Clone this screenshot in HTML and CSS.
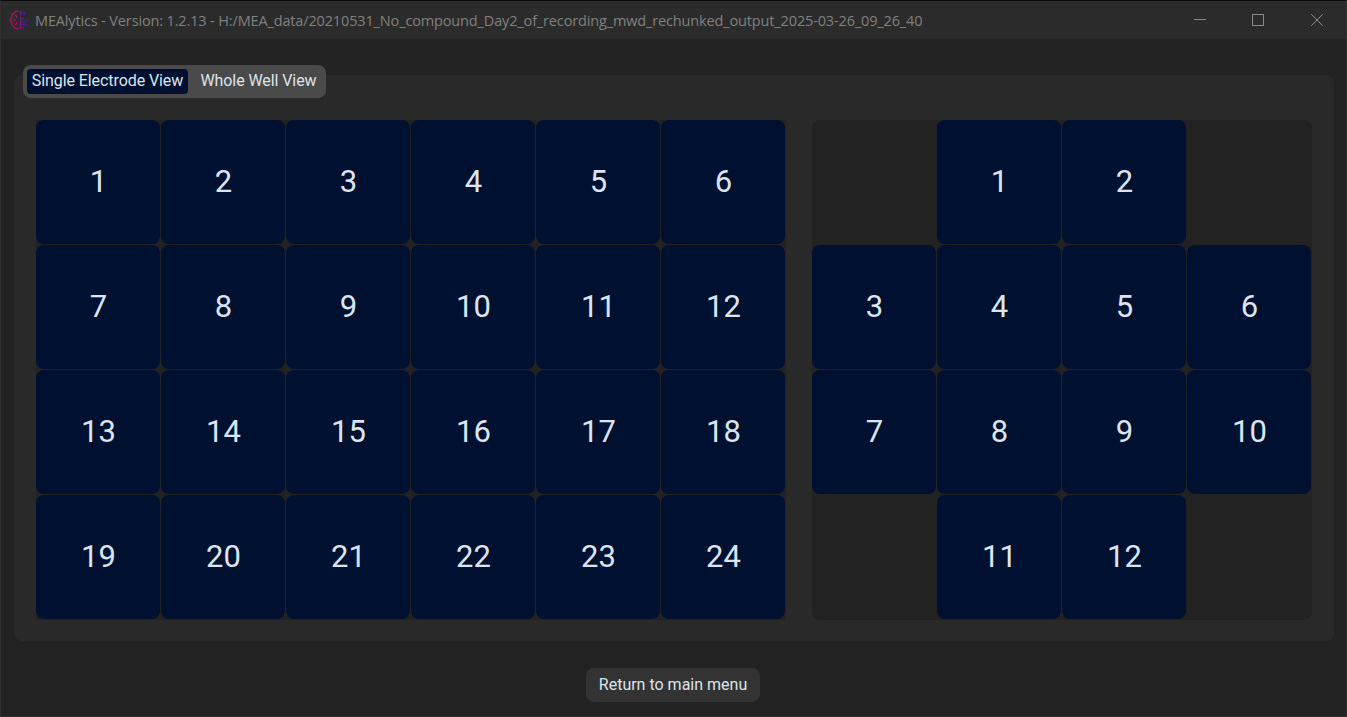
FILE: index.html
```
<!DOCTYPE html>
<html lang="en">
<head>
<meta charset="utf-8">
<title>MEAlytics</title>
<link rel="stylesheet" href="styles.css">
</head>
<body>
<div class="window">
  <header class="titlebar">
    <svg class="logo" width="20" height="20" viewBox="0 0 20 20" fill="none" stroke-width="1.3">
      <defs>
        <linearGradient id="brain" gradientUnits="userSpaceOnUse" x1="0" y1="0" x2="20" y2="0">
          <stop offset="0" stop-color="#b3105a"/><stop offset=".4" stop-color="#a01564"/><stop offset=".65" stop-color="#5c1c80"/><stop offset="1" stop-color="#1c2396"/>
        </linearGradient>
      </defs>
      <g stroke="url(#brain)">
        <path d="M10 1.500C8 .5 5.500 1.500 5 3.500C3 4 2.500 5.500 3 7.500C.5 9 .5 11.500 3 12.500C2.500 14.500 3.500 16 5 16.500C5.500 18.500 8 19.500 10 18.500"/>
        <path d="M6 5.500C7.500 5.500 8 6.500 7.500 8M4 10H6.500M6 14.500C7.500 14.500 8 13.500 7.500 12"/>
        <path d="M11.500 1V5M11.500 7V19M11.500 2.500H15.500V5M11.500 8.500H15M16 10.500H19.500M18.500 8V10.500M11.500 12H16M11.500 14.500H18.500V18M11.500 17.500H15"/>
      </g>
    </svg>
    <span class="caption">MEAlytics - Version: 1.2.13 - H:/MEA_data/20210531_No_compound_Day2_of_recording_mwd_rechunked_output_2025-03-26_09_26_40</span>
    <svg class="controls" width="176" height="38" viewBox="0 0 176 38" fill="none" stroke="#8b8b8b">
      <path d="M24 18.500H36"/>
      <rect x="82.500" y="13.500" width="11" height="11"/>
      <path d="M141.200 13.200L152.800 24.800M152.800 13.200L141.200 24.800"/>
    </svg>
  </header>
  <main class="content">
    <section class="panel">
      <nav class="tabs">
        <button class="tab active">Single Electrode View</button>
        <button class="tab">Whole Well View</button>
      </nav>
      <div class="grids">
        <div class="grid wells">
          <button>1</button><button>2</button><button>3</button><button>4</button><button>5</button><button>6</button>
          <button>7</button><button>8</button><button>9</button><button>10</button><button>11</button><button>12</button>
          <button>13</button><button>14</button><button>15</button><button>16</button><button>17</button><button>18</button>
          <button>19</button><button>20</button><button>21</button><button>22</button><button>23</button><button>24</button>
        </div>
        <div class="grid electrodes">
          <i></i><button>1</button><button>2</button><i></i>
          <button>3</button><button>4</button><button>5</button><button>6</button>
          <button>7</button><button>8</button><button>9</button><button>10</button>
          <i></i><button>11</button><button>12</button><i></i>
        </div>
      </div>
    </section>
    <button class="return">Return to main menu</button>
  </main>
</div>
</body>
</html>
```
FILE: styles.css
```
* { box-sizing: border-box; }
body { margin: 0; background: #222; font-family: Roboto, sans-serif; overflow: hidden; }
button { border: 0; padding: 0; font-family: inherit; color: #dce4ee; }
.window {
  width: 1347px;
  height: 717px;
  border: 1px solid #303030;
  border-top-color: #0b0b0b;
  background: #222;
}
.titlebar {
  display: flex;
  align-items: center;
  height: 38px;
  padding-left: 8px;
  background: #2b2b2b;
}
.logo { flex: none; }
.caption {
  flex: 1;
  padding: 2px 0 0 6px;
  font: 14.5px/20px "Open Sans", sans-serif;
  letter-spacing: -0.143px;
  color: #808080;
  white-space: nowrap;
}
.controls { flex: none; }
.content {
  display: flex;
  flex-direction: column;
  align-items: center;
  padding-top: 36px;
}
.panel {
  width: 1320px;
  height: 566px;
  margin-left: 1px;
  padding: 0 22px;
  border-radius: 8px;
  background: #292929;
}
.tabs {
  display: flex;
  width: 303px;
  height: 33px;
  margin: -10px 0 22px -13px;
  padding: 4px;
  border-radius: 8px;
  background: #4a4a4a;
}
.tab {
  flex: 1;
  height: 25px;
  padding: 0 0 1px 7px;
  border-radius: 4px;
  background: none;
  font-size: 16px;
  line-height: 22px;
  letter-spacing: -0.08px;
  white-space: nowrap;
}
.tab.active { flex: 0 0 161px; padding-left: 0; background: #001030; }
.grids { display: flex; gap: 26px; }
.grid {
  display: grid;
  grid-template-rows: repeat(4, 124px);
  gap: 1px;
  height: 500px;
  background: #222;
}
.wells { grid-template-columns: repeat(6, 124px); width: 750px; }
.electrodes { grid-template-columns: repeat(4, 124px); width: 500px; border-radius: 8px; }
.grid button {
  padding: 0 0 2px 1px;
  border-radius: 8px;
  background: #001030;
  font-size: 31px;
}
.return {
  width: 174px;
  height: 34px;
  margin: 27px 0 0 -1px;
  padding-bottom: 2px;
  border-radius: 8px;
  background: #333;
  font-size: 16px;
}
```
